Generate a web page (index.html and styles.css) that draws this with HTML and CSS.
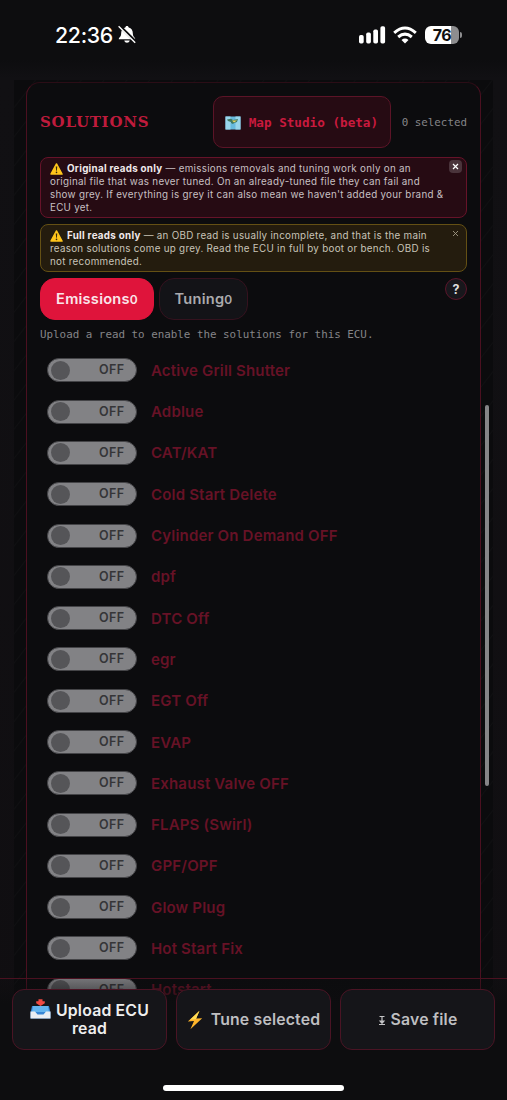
FILE: index.html
```html
<!DOCTYPE html>
<html lang="en">
<head>
<meta charset="utf-8">
<title>Solutions</title>
<link rel="stylesheet" href="styles.css">
</head>
<body>
<svg class="defs" aria-hidden="true">
  <symbol id="warn" viewBox="0 0 14 13"><path d="M7 1 13 12H1Z" fill="#ffc51b" stroke="#ffc51b" stroke-width="1.6" stroke-linejoin="round"/><path d="M6.2 3.8h1.6L7.4 8.4h-.8Z" fill="#35270c"/><circle cx="7" cy="10.2" r=".9" fill="#35270c"/></symbol>
</svg>
<div class="screen">
  <header class="status">
    <span class="time">22:36</span>
    <svg class="bell" width="18" height="19" viewBox="0 0 18 19"><path d="M.8 14.3c0-1.7 2.3-2.2 2.3-5.2 0-3.7 1.6-6 4.2-6.5C7.5 1.5 8 1 9 1s1.500.5 1.700 1.600c2.600.5 4.200 2.800 4.200 6.500 0 3 2.300 3.500 2.300 5.200ZM6.300 15.500h5.400C11.400 17 10.300 17.700 9 17.700S6.600 17 6.300 15.500Z" fill="#fff"/><path d="M1.300.7 18 17.200" stroke="#0d0d0f" stroke-width="3"/><path d="M.6 1.300 17.200 17.800" stroke="#fff" stroke-width="1.400"/></svg>
    <svg class="signal" width="27" height="18" viewBox="0 0 27 18" fill="#fff"><rect y="9" width="4.700" height="8.500" rx="1.700"/><rect x="7.200" y="6.500" width="4.700" height="11" rx="1.700"/><rect x="14.300" y="3.500" width="4.700" height="14" rx="1.700"/><rect x="21.400" y=".3" width="4.700" height="17.200" rx="1.700"/></svg>
    <svg class="wifi" width="24" height="18" viewBox="0 0 24 18" fill="none" stroke="#fff" stroke-width="3"><path d="M1.200 6.800Q12-2.800 22.800 6.800M5.200 11Q12 5.200 18.800 11"/><path d="M12 17.500 8.500 14Q12 11.200 15.500 14Z" fill="#fff" stroke="none"/></svg>
    <span class="battery">76</span><i class="nub"></i>
  </header>

  <main class="backdrop">
    <section class="card">
      <div class="head">
        <h1>SOLUTIONS</h1>
        <button class="studio">
          <svg width="16" height="14" viewBox="0 0 16 14"><path d="M.5.5h15v13H.5Z" fill="#67b9dd"/><path d="M.5.5h5v13h-5ZM10.500.5h5v13h-5Z" fill="#99d5eb"/><path d="M2 3.500l4-.8 2 1.400 5-1.100-1 3-3 1-1 1-2-1L6 6 3 5Z" fill="#3f7762"/><path d="M7 4.500h5L9 6.500Z" fill="#ead45d"/></svg>
          <span>Map Studio (beta)</span>
        </button>
        <span class="count">0 selected</span>
      </div>

      <div class="notice red">
        <p><svg class="warn"><use href="#warn"/></svg><b>Original reads only</b> — emissions removals and tuning work only on an<br>original file that was never tuned. On an already-tuned file they can fail and<br>show grey. If everything is grey it can also mean we haven't added your brand &amp;<br>ECU yet.</p>
        <button class="close"><svg width="7" height="7" viewBox="0 0 7 7"><path d="M1 1 6 6M6 1 1 6"/></svg></button>
      </div>
      <div class="notice amber">
        <p><svg class="warn"><use href="#warn"/></svg><b>Full reads only</b> — an OBD read is usually incomplete, and that is the main<br>reason solutions come up grey. Read the ECU in full by boot or bench. OBD is<br>not recommended.</p>
        <button class="close"><svg width="7" height="7" viewBox="0 0 7 7"><path d="M1 1 6 6M6 1 1 6"/></svg></button>
      </div>

      <div class="tabs">
        <button class="tab active">Emissions<small>0</small></button>
        <button class="tab">Tuning<small>0</small></button>
        <button class="help">?</button>
      </div>
      <p class="hint">Upload a read to enable the solutions for this ECU.</p>

      <ul class="list">
        <li><span class="toggle">OFF</span><span class="name">Active Grill Shutter</span></li>
        <li><span class="toggle">OFF</span><span class="name">Adblue</span></li>
        <li><span class="toggle">OFF</span><span class="name">CAT/KAT</span></li>
        <li><span class="toggle">OFF</span><span class="name">Cold Start Delete</span></li>
        <li><span class="toggle">OFF</span><span class="name">Cylinder On Demand OFF</span></li>
        <li><span class="toggle">OFF</span><span class="name">dpf</span></li>
        <li><span class="toggle">OFF</span><span class="name">DTC Off</span></li>
        <li><span class="toggle">OFF</span><span class="name">egr</span></li>
        <li><span class="toggle">OFF</span><span class="name">EGT Off</span></li>
        <li><span class="toggle">OFF</span><span class="name">EVAP</span></li>
        <li><span class="toggle">OFF</span><span class="name">Exhaust Valve OFF</span></li>
        <li><span class="toggle">OFF</span><span class="name">FLAPS (Swirl)</span></li>
        <li><span class="toggle">OFF</span><span class="name">GPF/OPF</span></li>
        <li><span class="toggle">OFF</span><span class="name">Glow Plug</span></li>
        <li><span class="toggle">OFF</span><span class="name">Hot Start Fix</span></li>
        <li><span class="toggle">OFF</span><span class="name">Hotstart</span></li>
      </ul>
    </section>
  </main>
  <i class="scrollbar"></i>

  <footer class="dock">
    <div class="actions">
      <button class="action bright"><span><svg class="tray" width="21" height="20" viewBox="0 0 21 20"><path d="M2 7h17l1.500 7v5.500H.5V14Z" fill="#3686d5"/><path d="M3 7h15l1 6H2Z" fill="#63b4ee"/><path d="M.5 12.500H5l2.500 3h6l2.500-3h4.500v7H.5Z" fill="#e9edf2"/><path d="M8.500.3h4v2h2.300v2L10.500 7 6.200 4.300v-2h2.300Z" fill="#ef4942"/></svg>Upload ECU<br>read</span></button>
      <button class="action"><svg class="bolt" width="16" height="20" viewBox="0 0 16 20"><path d="M12.500.8.8 11.500 7 11 3.400 19.200 15.200 8.200 9 8.600Z" fill="#ffb52b"/><path d="M12.500.8 3 9.800 9 9Z" fill="#ffdc55"/></svg>Tune selected</button>
      <button class="action"><svg class="down" width="8" height="11" viewBox="0 0 8 11"><path d="M1.500 1.500h5M4 1v6M1 9.500h6" stroke="#c4c4c6" stroke-width="1.200"/><path d="M.8 5.500h6.400L4 9.200Z" fill="#c4c4c6"/></svg>Save file</button>
    </div>
    <i class="home"></i>
  </footer>
</div>
</body>
</html>
```
FILE: styles.css
```css
* { box-sizing: border-box; }
body { margin: 0; background: #0d0d0f; font-family: Inter, "Noto Sans", sans-serif; }
button { font: inherit; color: inherit; margin: 0; padding: 0; border: 0; background: none; }
h1, p, ul { margin: 0; padding: 0; }
.defs { position: absolute; width: 0; height: 0; }
.screen { position: relative; width: 507px; height: 1100px; overflow: hidden; background: linear-gradient(#0d0d0f 60px, #111013 78px, #100e11 100%); }

.status { height: 80px; padding: 0 45px 11px 55px; display: flex; align-items: center; color: #fff; }
.time { width: 58px; font-size: 21.3px; font-weight: 500; letter-spacing: -.3px; white-space: nowrap; }
.bell { margin-left: 5px; }
.signal { margin-left: auto; }
.wifi { margin-left: 7px; }
.battery { width: 34px; height: 18px; margin-left: 8px; border-radius: 6px; background: linear-gradient(90deg, #fff 76%, #8d8d8f 76%); color: #111; font-size: 16px; line-height: 18px; font-weight: 700; letter-spacing: -.5px; text-align: center; }
.nub { width: 2px; height: 6px; margin-left: 1px; border-radius: 0 3px 3px 0; background: #8d8d8f; }

.backdrop { height: 1020px; margin: 0 14px; padding: 2px 12px 0; background: repeating-linear-gradient(128deg, #0b0b0d 0 16px, #101012 17px, #0b0b0d 18px); overflow: hidden; }
.card { height: 1100px; padding: 13px 13px 0; border: 1px solid #4b1020; border-top-color: #2b0d16; border-radius: 14px; background: #0c0c0e; width: 455px; }

.head { display: flex; align-items: center; height: 52px; }
h1 { font: bold 15px/24px "DejaVu Serif", serif; letter-spacing: .75px; color: #bf1b3c; }
.studio { display: flex; align-items: center; gap: 8px; width: 178px; height: 52px; margin-left: auto; padding: 1px 0 0 11px; border: 1px solid #5c1427; border-radius: 10px; background: #260b13; color: #c91a3e; font: bold 12.65px "DejaVu Sans Mono", monospace; white-space: nowrap; }
.count { margin-left: 11px; color: #858588; font: 10.85px "DejaVu Sans Mono", monospace; white-space: nowrap; }

.notice { position: relative; padding: 5px 9px; border: 1px solid #661329; border-radius: 8px; color: #c8c0c3; font-size: 9.8px; line-height: 12.9px; letter-spacing: .29px; white-space: nowrap; }
.notice b { color: #f0e9eb; }
.red { height: 61px; margin-top: 9px; background: #260b13; }
.amber { height: 48px; margin-top: 6px; border-color: #645014; background: #241c0e; color: #c8c4b9; }
.warn { width: 13px; height: 12px; margin: -2px 4px -2px 0; vertical-align: -1px; }
.close { position: absolute; top: 2px; right: 4px; width: 13px; height: 13px; border-radius: 4px; display: grid; place-items: center; }
.close path { stroke: #a39b87; stroke-width: .9; fill: none; }
.red .close { background: #4a343b; }
.red .close path { stroke: #fff; stroke-width: 1.200; }

.tabs { display: flex; gap: 5px; height: 42px; margin-top: 6px; }
.tab { width: 89px; border: 1px solid #35121e; border-radius: 15px; background: #131317; color: #aaaaad; font-size: 14.6px; font-weight: 600; letter-spacing: .25px; white-space: nowrap; }
.tab small { font-size: 12px; }
.tab.active { width: 114px; border-color: #df143b; background: #df143b; color: #fae5e9; }
.help { width: 22px; height: 22px; margin-left: auto; border: 1px solid #5b152a; border-radius: 50%; background: #18171c; color: #ddd; font-size: 12.5px; font-weight: 700; }
.hint { margin-top: 7px; color: #858588; font: 10.87px/16px "DejaVu Sans Mono", monospace; white-space: nowrap; }

.list { margin-top: 6.700px; padding-left: 7px; list-style: none; }
.list li { display: flex; align-items: center; height: 41.3px; }
.toggle { position: relative; width: 90px; height: 24px; border: 1.500px solid #444447; border-radius: 12px; background: #828285; color: #353538; padding-left: 51px; font-size: 12.5px; line-height: 22px; font-weight: 600; letter-spacing: .4px; }
.toggle::before { content: ""; position: absolute; left: 3px; top: 1.500px; width: 19px; height: 19px; border-radius: 50%; background: #555558; }
.name { margin-left: 14px; color: #671226; font-size: 15px; font-weight: 600; letter-spacing: .18px; white-space: nowrap; }
.scrollbar { position: absolute; left: 485px; top: 405px; width: 4px; height: 381px; border-radius: 2px; background: #858587; }

.dock { position: absolute; inset: 978px 0 0; border-top: 1px solid #4b1120; background: linear-gradient(rgba(13,13,15,.12), rgba(13,13,15,.45) 14px, #0d0d0f 25px); }
.actions { display: flex; gap: 9px; padding: 10px 12px 0; }
.action { display: flex; flex: 1; align-items: center; justify-content: center; height: 61px; padding-top: 1px; border: 1px solid #4a1424; border-radius: 12px; background: #151519; color: #bfbfc1; font-size: 15.8px; line-height: 18.500px; font-weight: 600; letter-spacing: .18px; white-space: nowrap; }
.bright { color: #eee; }
.tray { margin-right: 5px; vertical-align: -3px; margin-top: -5px; }
.bolt { margin-right: 8px; }
.down { margin-right: 5px; }
.home { display: block; width: 181px; height: 6px; margin: 35px auto 0; border-radius: 3px; background: #fff; }
```
